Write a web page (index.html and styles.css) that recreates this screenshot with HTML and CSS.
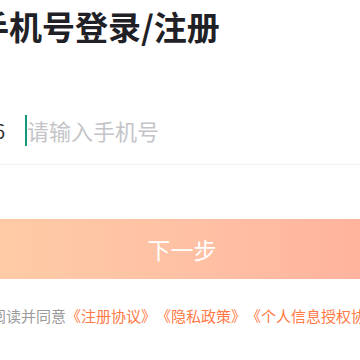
FILE: index.html
```html
<!DOCTYPE html>
<html lang="zh-CN">
<head>
<meta charset="utf-8">
<title>手机号登录/注册</title>
<link rel="stylesheet" href="styles.css">
</head>
<body>
<div class="page">
  <h1 class="title">手机号登录/注册</h1>
  <div class="phone-row">
    <span class="prefix">+86</span>
    <span class="caret"></span>
    <span class="placeholder">请输入手机号</span>
  </div>
  <div class="next-btn">下一步</div>
  <p class="agree">阅读并同意<span class="link">《注册协议》</span><span class="link">《隐私政策》</span><span class="link">《个人信息授权协议》</span></p>
</div>
</body>
</html>
```
FILE: styles.css
```css
html, body {
  margin: 0;
  padding: 0;
  background: #ffffff;
  overflow: hidden;
}
body {
  width: 360px;
  height: 360px;
  font-family: "Noto Sans CJK SC", "Noto Sans", sans-serif;
}
.page {
  margin-left: -23px;
  width: 410px;
}
.title {
  margin: 3px 0 0 -1px;
  font-size: 33px;
  line-height: 46px;
  font-weight: 700;
  color: #1f2126;
  white-space: nowrap;
}
.phone-row {
  margin-top: 47px;
  height: 68px;
  display: flex;
  align-items: center;
  border-bottom: 1px solid #f0f0f0;
}
.prefix {
  flex: none;
  width: 40px;
  margin-left: -12px;
  text-align: right;
  font-size: 20px;
  color: #333333;
  white-space: nowrap;
}
.caret {
  flex: none;
  width: 2px;
  height: 31px;
  margin-left: 20px;
  background: #139a7c;
}
.placeholder {
  font-size: 22px;
  color: #c4c4c8;
  white-space: nowrap;
  line-height: 31px;
}
.next-btn {
  margin-top: 54px;
  height: 60px;
  line-height: 60px;
  text-align: center;
  font-size: 23px;
  color: #ffffff;
  background: linear-gradient(90deg, #ffcca6 0%, #ffc0a4 55%, #ffb19d 100%);
}
.agree {
  margin: 26px 0 0 0;
  padding-left: 14px;
  font-size: 15px;
  line-height: 22px;
  color: #9a9a9a;
  white-space: nowrap;
  text-spacing-trim: space-all;
}
.link {
  color: #ff7a45;
}
```
